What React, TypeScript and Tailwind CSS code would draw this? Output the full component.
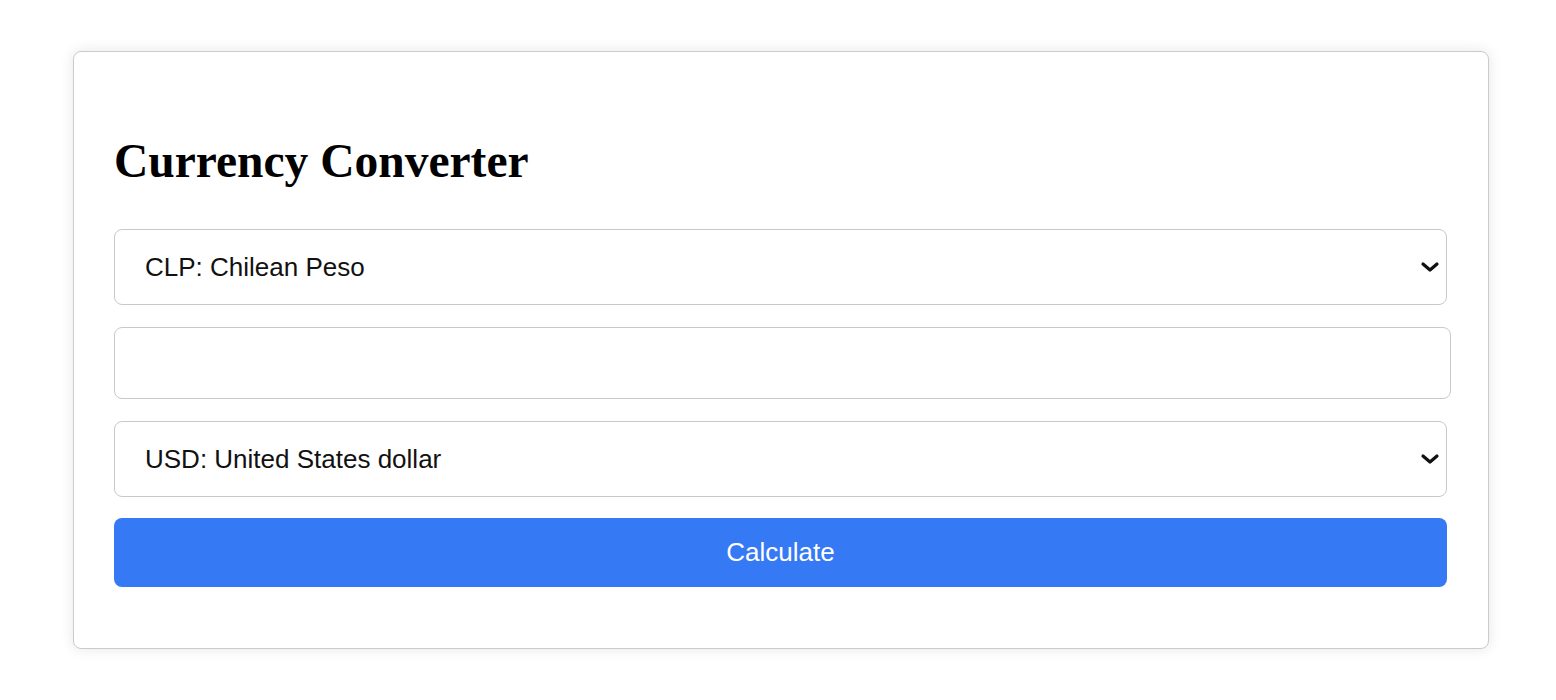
import { useState } from "react";

const Chevron = () => (
  <svg
    width="20"
    height="12"
    viewBox="0 0 20 12"
    className="pointer-events-none absolute right-[7px] top-1/2 -translate-y-1/2"
  >
    <path d="M3 3 L10 9 L17 3" fill="none" stroke="#111" strokeWidth="3.2" strokeLinecap="round" strokeLinejoin="round" />
  </svg>
);

const CurrencySelect = ({ value, options, onChange }: any) => {
  return (
    <div className="relative w-full">
      <select
        value={value}
        onChange={(e) => onChange(e.target.value)}
        className="block h-[76px] w-full appearance-none rounded-[8px] border border-[#c9c9c9] bg-white pl-[30px] pr-[40px] text-[26px] text-[#111] outline-none"
        style={{ fontFamily: '"Liberation Sans", Arial, sans-serif' }}
      >
        {options.map((o: any) => (
          <option key={o.code} value={o.code}>
            {o.code}: {o.name}
          </option>
        ))}
      </select>
      <Chevron />
    </div>
  );
};

const currencies = [
  { code: "CLP", name: "Chilean Peso" },
  { code: "USD", name: "United States dollar" },
  { code: "EUR", name: "Euro" },
];

export default function App() {
  const [from, setFrom] = useState("CLP");
  const [to, setTo] = useState("USD");
  const [amount, setAmount] = useState("");

  return (
    <div className="min-h-screen bg-white pt-[51px] pl-[73px]" style={{ fontFamily: '"Liberation Sans", Arial, sans-serif' }}>
      <div className="w-[1416px] h-[598px] rounded-[8px] border border-[#cbcbcb] bg-white px-[40px] pr-[41px] pt-[82px] shadow-[0_0_14px_rgba(0,0,0,0.1)]">
        <h1
          className="text-[47.5px] font-bold leading-[54px] text-black"
          style={{ fontFamily: '"Liberation Serif", "Times New Roman", serif' }}
        >
          Currency Converter
        </h1>
        <div className="mt-[41px] flex flex-col">
          <CurrencySelect value={from} options={currencies} onChange={setFrom} />
          <input
            type="text"
            value={amount}
            onChange={(e) => setAmount(e.target.value)}
            className="mt-[22px] block h-[72px] w-[calc(100%+4px)] rounded-[8px] border border-[#c9c9c9] bg-white px-[30px] text-[26px] outline-none"
          />
          <div className="mt-[22px]">
            <CurrencySelect value={to} options={currencies} onChange={setTo} />
          </div>
          <button className="mt-[21px] h-[69px] w-full rounded-[8px] bg-[#3679f5] text-[26px] text-white">
            Calculate
          </button>
        </div>
      </div>
    </div>
  );
}
